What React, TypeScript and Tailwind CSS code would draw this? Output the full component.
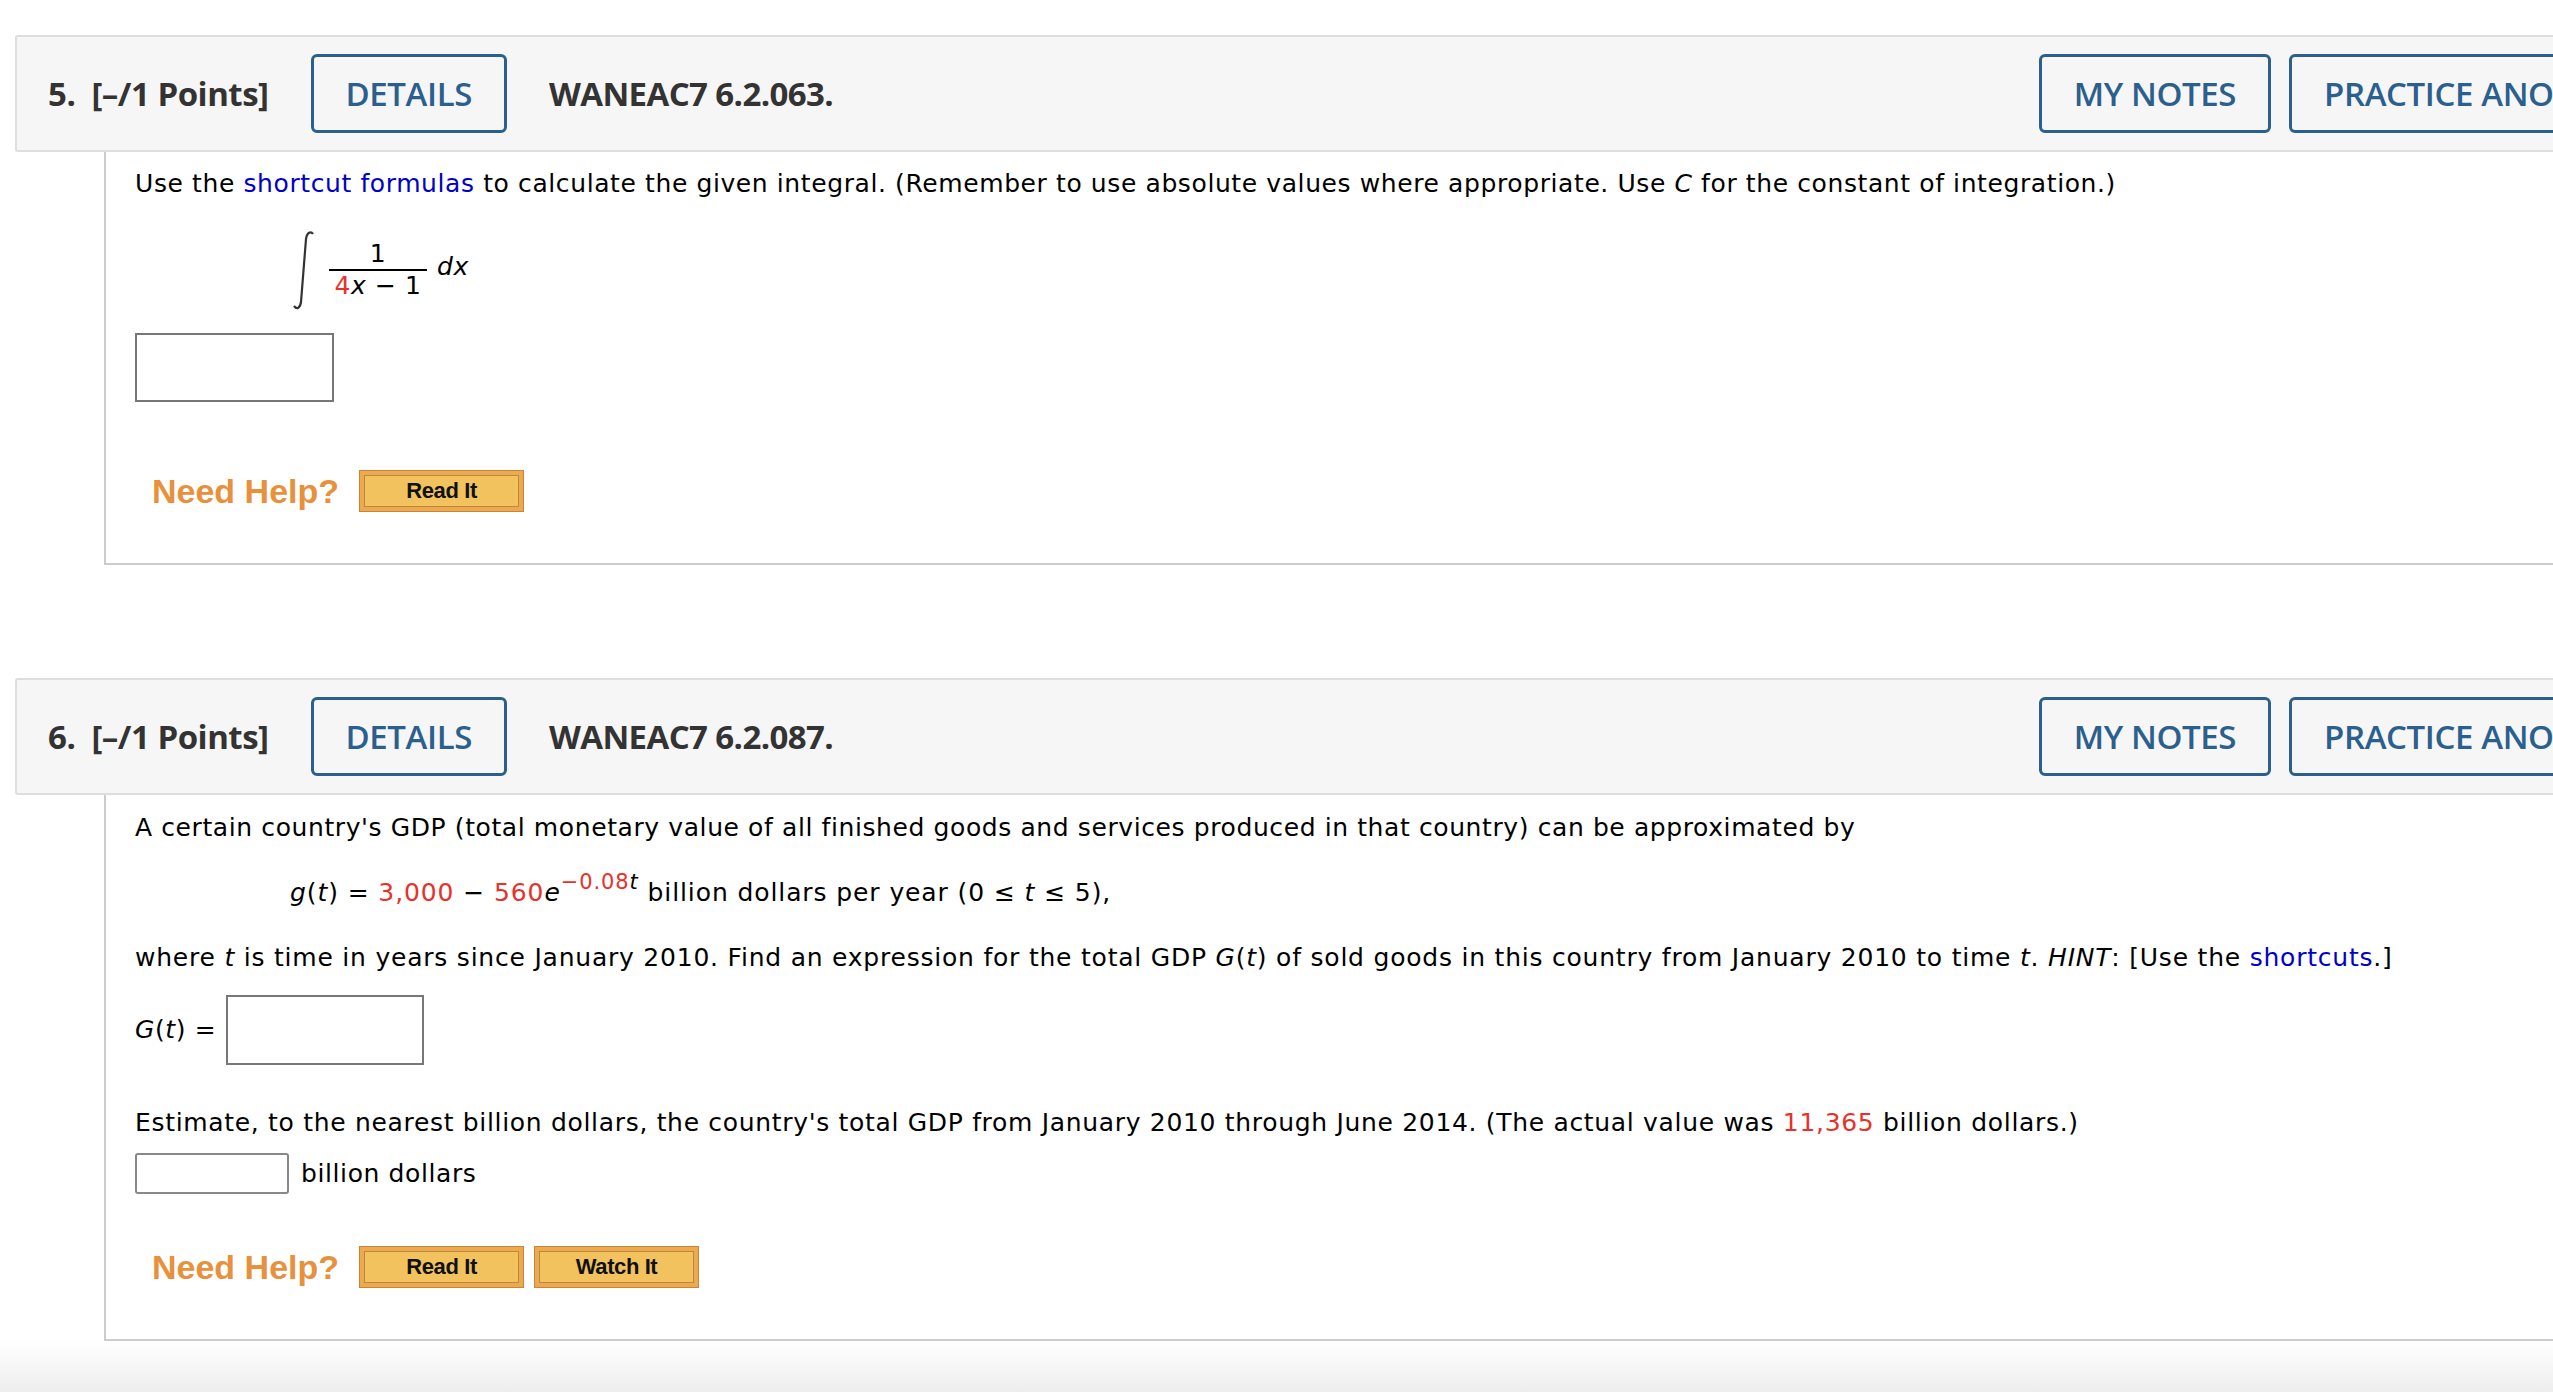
import type { ReactNode } from "react";

const HEADER_FONT = "font-['Open_Sans',sans-serif]";
const BODY_FONT = "font-['DejaVu_Sans','Verdana',sans-serif]";

function OutlineButton({ children }: { children: ReactNode }) {
    return (
        <button className="h-[79px] shrink-0 rounded-[6px] border-[3px] border-[#2b5f8e] px-[32px] text-[33px] font-semibold tracking-[-0.4px] text-[#2b5f8e]">
            {children}
        </button>
    );
}

function HelpButton({ label }: { label: string }) {
    return (
        <div className="h-[42px] w-[165px] border border-[#c98533] bg-[#eca94f] p-[4px]">
            <div className="flex h-full items-center justify-center border border-[#b98a3c] bg-[#f2c25e] font-['Liberation_Sans',Arial,sans-serif] text-[22px] font-bold tracking-[-0.4px] text-[#111]">
                {label}
            </div>
        </div>
    );
}

function NeedHelp({ buttons }: { buttons: string[] }) {
    return (
        <div className="flex items-center">
            <span className="ml-[17px] mr-[20px] font-['Liberation_Sans',Arial,sans-serif] text-[34px] font-bold tracking-[0px] text-[#e8913c]">
                Need Help?
            </span>
            <div className="flex gap-[10px]">
                {buttons.map((b) => (
                    <HelpButton key={b} label={b} />
                ))}
            </div>
        </div>
    );
}

function QuestionHeader({ num, code }: { num: number; code: string }) {
    return (
        <div
            className={`flex h-[117px] w-[2671px] items-center rounded-l-[3px] border-2 border-r-0 border-[#dedede] bg-[#f6f6f6] pl-[31px] pr-[16px] text-[#333] ${HEADER_FONT}`}
        >
            <span className="text-[33px] font-bold tracking-[-0.5px]">
                {num}.&nbsp; [–/1 Points]
            </span>
            <div className="ml-[42px]">
                <OutlineButton>DETAILS</OutlineButton>
            </div>
            <span className="ml-[42px] text-[33px] font-bold tracking-[-0.6px]">{code}</span>
            <div className="ml-auto flex gap-[18px]">
                <OutlineButton>MY NOTES</OutlineButton>
                <OutlineButton>PRACTICE ANOTHER</OutlineButton>
            </div>
        </div>
    );
}

function IntegralSign() {
    return (
        <svg width="24" height="80" viewBox="0 0 24 80" className="shrink-0">
            <path
                d="M2 76 C 5 80, 8 78, 9 72 L 14 9 C 15 2, 19 1, 21 4"
                fill="none"
                stroke="#333"
                strokeWidth="2.2"
            />
        </svg>
    );
}

function Question5() {
    return (
        <section className="pl-[15px]">
            <QuestionHeader num={5} code="WANEAC7 6.2.063." />
            <div className={`ml-[89px] border-b-2 border-l-2 border-[#cccccc] pb-[51px] pl-[29px] pt-[14px] text-[25px] leading-[36px] tracking-[0.6px] text-black ${BODY_FONT}`}>
                <p>
                    Use the <span className="text-[#0000cc]">shortcut formulas</span> to calculate the given
                    integral. (Remember to use absolute values where appropriate. Use <i>C</i> for the constant
                    of integration.)
                </p>
                <div className="ml-[157px] mt-[28px] flex h-[80px] items-center">
                    <IntegralSign />
                    <div className="ml-[13px] flex flex-col items-center">
                        <span className="leading-[30px]">1</span>
                        <span className="h-[2px] w-[98px] bg-black" />
                        <span className="leading-[30px]">
                            <span className="text-[#e8312a]">4</span>
                            <i>x</i> − 1
                        </span>
                    </div>
                    <i className="mb-[6px] ml-[10px]">dx</i>
                </div>
                <div className="mt-[23px] h-[69px] w-[199px] border-2 border-[#777]" />
                <div className="mt-[68px]">
                    <NeedHelp buttons={["Read It"]} />
                </div>
            </div>
        </section>
    );
}

function Question6() {
    return (
        <section className="mt-[113px] pl-[15px]">
            <QuestionHeader num={6} code="WANEAC7 6.2.087." />
            <div className={`ml-[89px] border-b-2 border-l-2 border-[#cccccc] pb-[51px] pl-[29px] pt-[15px] text-[25px] leading-[36px] tracking-[0.6px] text-black ${BODY_FONT}`}>
                <p>
                    A certain country's GDP (total monetary value of all finished goods and services produced
                    in that country) can be approximated by
                </p>
                <p className="ml-[155px] mt-[29px] tracking-[0.9px]">
                    <i>g</i>(<i>t</i>) = <span className="text-[#e8312a]">3,000</span> −{" "}
                    <span className="text-[#e8312a]">560</span>
                    <i>e</i>
                    <sup className="relative top-[-12px] text-[21px]">
                        <span className="text-[#e8312a]">−0.08</span>
                        <i>t</i>
                    </sup>{" "}
                    billion dollars per year (0 ≤ <i>t</i> ≤ 5),
                </p>
                <p className="mt-[29px] tracking-[0.78px]">
                    where <i>t</i> is time in years since January 2010. Find an expression for the total GDP{" "}
                    <i>G</i>(<i>t</i>) of sold goods in this country from January 2010 to time <i>t</i>.{" "}
                    <i>HINT</i>: [Use the <span className="text-[#0000cc]">shortcuts</span>.]
                </p>
                <div className="mt-[19px] flex items-center">
                    <span>
                        <i>G</i>(<i>t</i>) =
                    </span>
                    <div className="ml-[10px] h-[70px] w-[198px] border-2 border-[#777]" />
                </div>
                <p className="mt-[40px] tracking-[0.68px]">
                    Estimate, to the nearest billion dollars, the country's total GDP from January 2010 through
                    June 2014. (The actual value was <span className="text-[#e8312a]">11,365</span> billion
                    dollars.)
                </p>
                <div className="mt-[12px] flex items-center">
                    <div className="h-[41px] w-[154px] rounded-[3px] border-2 border-[#888]" />
                    <span className="ml-[12px]">billion dollars</span>
                </div>
                <div className="mt-[52px]">
                    <NeedHelp buttons={["Read It", "Watch It"]} />
                </div>
            </div>
        </section>
    );
}

export default function App() {
    return (
        <div className="flex h-[1392px] flex-col overflow-hidden bg-white pt-[35px]">
            <Question5 />
            <Question6 />
            <div className="flex-1 bg-gradient-to-b from-white to-[#ededed]" />
        </div>
    );
}
